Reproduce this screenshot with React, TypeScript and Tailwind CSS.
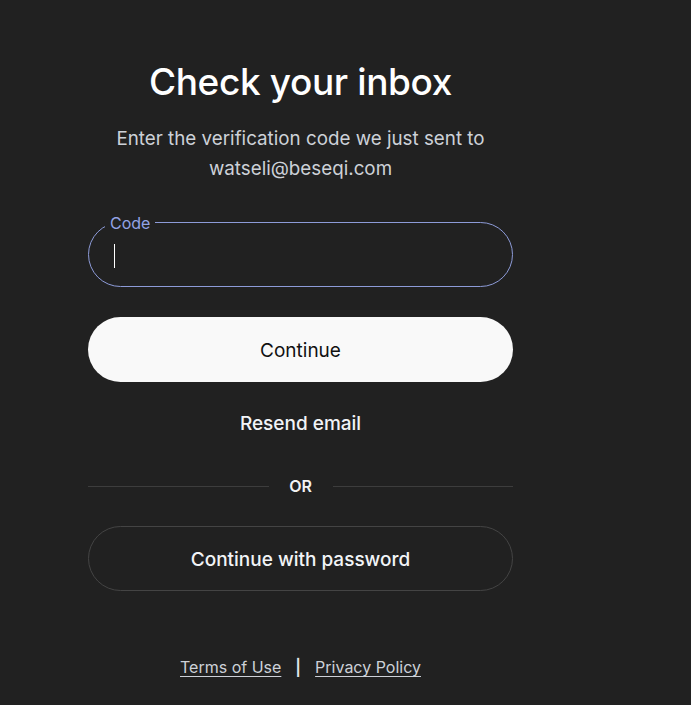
export default function App() {
  return (
    <div className="min-h-[705px] w-full bg-[#212121] font-['Inter','Noto_Sans',sans-serif] text-white">
      <div className="ml-[88px] flex w-[425px] flex-col items-center pt-[58px]">
        <h1 className="text-[37px] font-medium leading-[48px] tracking-[-0.01em] text-white">
          Check your inbox
        </h1>
        <p className="mt-[18px] text-center text-[18.8px] leading-[30px] text-[#cdd1d8]">
          Enter the verification code we just sent to
          <br />
          watseli@beseqi.com
        </p>

        {/* Code field */}
        <div className="relative mt-[38px] h-[65px] w-full rounded-full border border-[#8d9bd8]">
          <span className="absolute -top-[9px] left-[16px] bg-[#212121] px-[5px] text-[16px] leading-[18px] text-[#93a3e6]">
            Code
          </span>
          <div className="ml-[25px] mt-[21px] h-[24px] w-px bg-white" />
        </div>

        <button className="mt-[30px] h-[65px] w-full rounded-full bg-[#f9f9f9] pt-[3px] text-[19px] text-[#111]">
          Continue
        </button>

        <button className="mt-[28px] pt-[2px] text-[19px] font-medium leading-[24px] text-[#f2f4f7]">
          Resend email
        </button>

        {/* Divider */}
        <div className="mt-[40px] flex h-[20px] w-full items-center">
          <div className="h-px flex-1 bg-[#3d3d3d]" />
          <span className="w-[64px] text-center text-[16px] font-semibold text-[#f2f2f2]">OR</span>
          <div className="h-px flex-1 bg-[#3d3d3d]" />
        </div>

        <button className="mt-[30px] h-[65px] w-full rounded-full border border-[#444444] pt-[3px] text-[19px] font-medium text-[#f2f4f7]">
          Continue with password
        </button>

        <div className="mt-[64px] flex items-center gap-[14px] text-[16px] leading-[24px] text-[#cdd1d8]">
          <a className="underline underline-offset-[3px]">Terms of Use</a>
          <span className="font-semibold text-[#e5e7eb]">|</span>
          <a className="underline underline-offset-[3px]">Privacy Policy</a>
        </div>
      </div>
    </div>
  );
}
